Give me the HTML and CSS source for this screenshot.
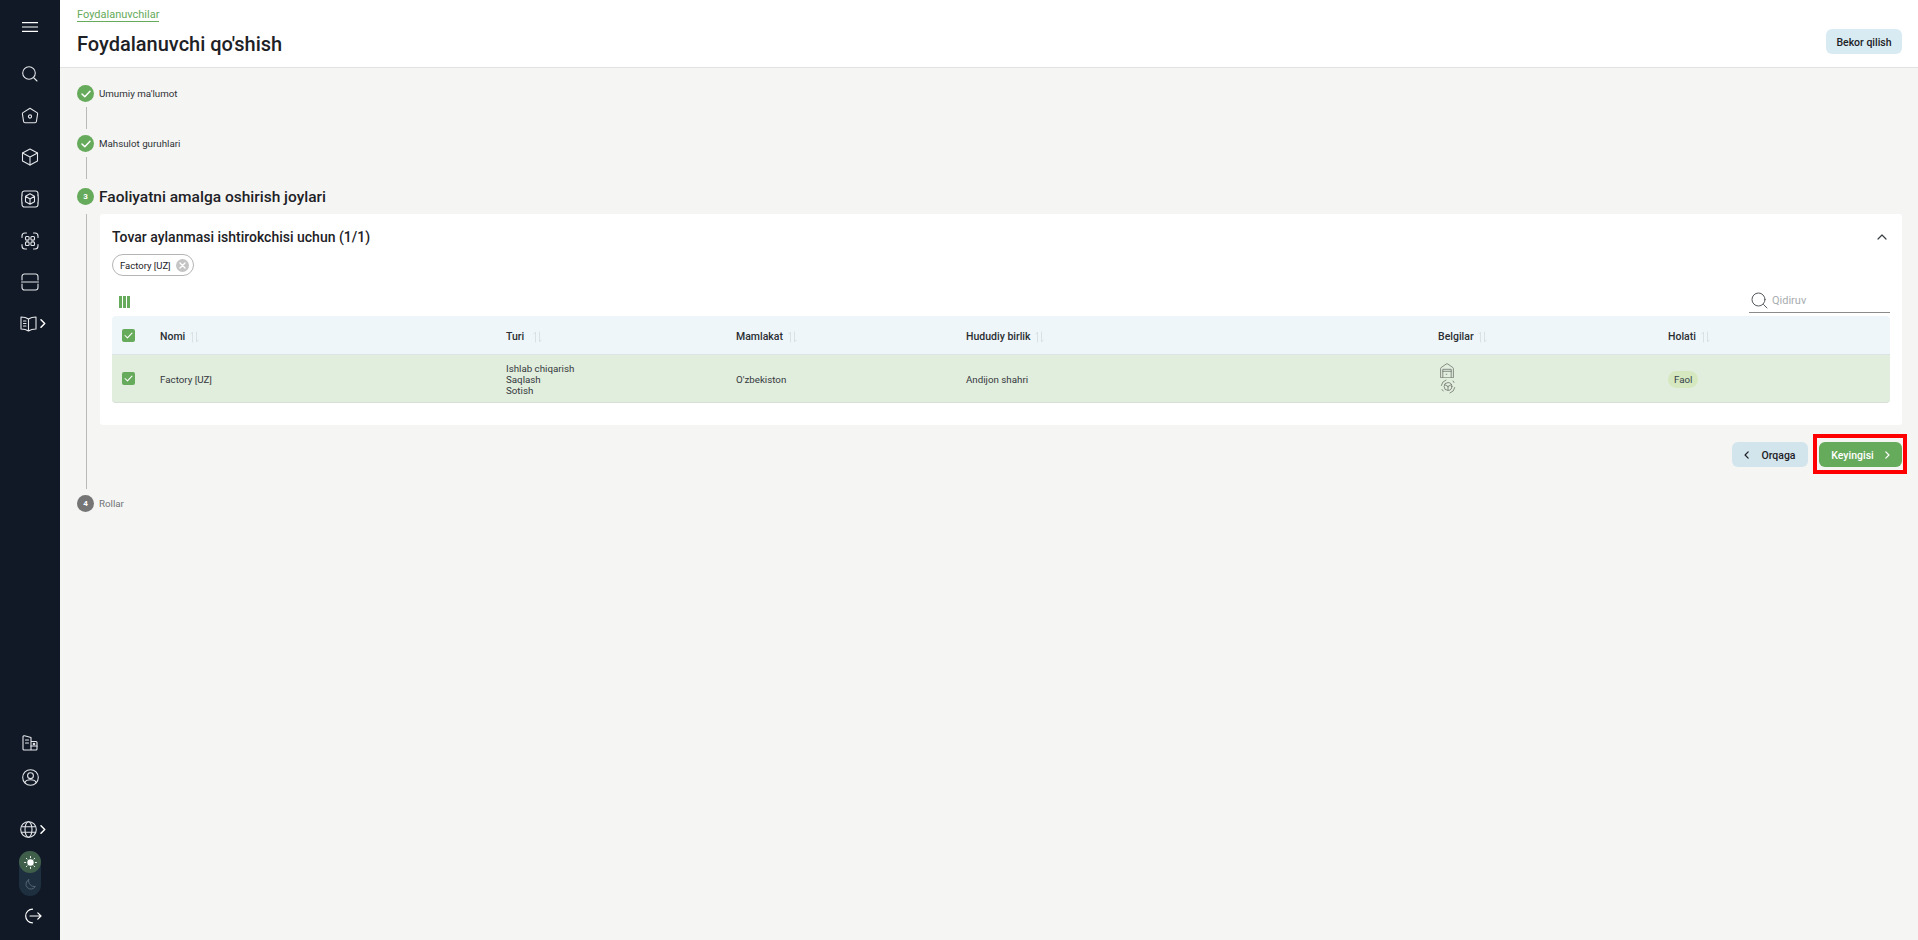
FILE: index.html
```html
<!DOCTYPE html>
<html lang="uz">
<head>
<meta charset="utf-8">
<title>Foydalanuvchi qo'shish</title>
<link rel="stylesheet" href="styles.css">
</head>
<body>
<div class="app">
  <aside class="sidebar">
    <div class="menu-btn"><svg width="16" height="10" viewBox="0 0 16 10"><path d="M0 .6h16M0 5h16M0 9.400h16"/></svg></div>
    <nav class="nav">
      <div class="nav-item"><svg width="18" height="18" viewBox="0 0 18 18"><circle cx="8" cy="8" r="6.3"/><path d="M13 13l3 3"/></svg></div>
      <div class="nav-item"><svg width="18" height="18" viewBox="0 0 18 18"><path d="M9 1.2l7 4.4c.5.3.7.8.6 1.3l-1.2 7.6c-.1.8-.7 1.3-1.5 1.3H4.1c-.8 0-1.4-.5-1.5-1.3L1.4 6.900c-.1-.5.1-1 .6-1.300z"/><circle cx="9" cy="9.500" r="1.600"/></svg></div>
      <div class="nav-item"><svg width="18" height="18" viewBox="0 0 18 18"><path d="M9 1l7.500 4v8L9 17l-7.500-4V5z"/><path d="M1.500 5L9 9l7.500-4M9 9v8"/></svg></div>
      <div class="nav-item"><svg width="18" height="18" viewBox="0 0 18 18"><path d="M1 5V3.500A2.500 2.500 0 0 1 3.500 1h11A2.500 2.500 0 0 1 17 3.500V5M1 13v1.500A2.500 2.500 0 0 0 3.500 17h11a2.500 2.500 0 0 0 2.500-2.500V13"/><path d="M9 3.800l4.500 2.500v5.400L9 14.200l-4.500-2.500V6.300zM4.500 6.300L9 9l4.500-2.700M9 9v5.200"/><path d="M1 5q-.6 4 0 8M17 5q.6 4 0 8"/></svg></div>
      <div class="nav-item"><svg width="18" height="18" viewBox="0 0 18 18"><path d="M1 5.500V4a3 3 0 0 1 3-3h1.500M12.500 1H14a3 3 0 0 1 3 3v1.500M17 12.500V14a3 3 0 0 1-3 3h-1.500M5.500 17H4a3 3 0 0 1-3-3v-1.500"/><rect x="4.500" y="4.500" width="3.600" height="3.600" rx="1"/><rect x="9.900" y="4.500" width="3.600" height="3.600" rx="1"/><rect x="4.500" y="9.900" width="3.600" height="3.600" rx="1"/><rect x="9.900" y="9.900" width="3.600" height="3.600" rx="1"/></svg></div>
      <div class="nav-item"><svg width="18" height="18" viewBox="0 0 18 18"><path d="M1 7V3.500A2.500 2.500 0 0 1 3.500 1h11A2.500 2.500 0 0 1 17 3.500V7M1 11v3.500A2.500 2.500 0 0 0 3.500 17h11a2.500 2.500 0 0 0 2.500-2.500V11M.5 9h17"/></svg></div>
      <div class="nav-item nav-item-more"><svg width="17" height="16" viewBox="0 0 17 16"><path d="M8.500 3C6.500 1.600 4 1 1 1v12c3 0 5.500.6 7.500 2 2-1.400 4.500-2 7.500-2V1c-3 0-5.500.6-7.500 2zM8.500 3v12"/><path d="M3.500 5h2.500M3.500 7.500h2.500M3.500 10h2.500"/></svg><svg class="more" width="6" height="9" viewBox="0 0 6 9"><path d="M1 .8l3.700 3.700L1 8.200"/></svg></div>
    </nav>
    <div class="side-bottom">
      <div class="nav-item nav-item-low"><svg width="16" height="16" viewBox="0 0 16 16"><path d="M9 15V2.500L2.500 .8C1.600.6 1 1.200 1 2v12c0 .6.400 1 1 1h12c.6 0 1-.4 1-1V7.500c0-.6-.4-1-1-1H9"/><path d="M3.500 5h3M3.500 8h3M9 11h6"/><circle cx="12" cy="9" r=".8"/></svg></div>
      <div class="nav-item nav-item-low"><svg width="17" height="17" viewBox="0 0 17 17"><circle cx="8.500" cy="8.500" r="7.800"/><circle cx="8.500" cy="6.700" r="2.900"/><path d="M3 13.500c.5-1.700 2.500-2.800 5.500-2.800s5 1.100 5.500 2.800"/></svg></div>
      <div class="nav-item nav-item-lang"><svg width="17" height="17" viewBox="0 0 17 17"><circle cx="8.500" cy="8.500" r="7.800"/><ellipse cx="8.500" cy="8.500" rx="3.500" ry="7.800"/><path d="M1.500 5.700h14M1.500 11.300h14"/></svg><svg class="more" width="6" height="9" viewBox="0 0 6 9"><path d="M1 .8l3.700 3.700L1 8.200"/></svg></div>
      <div class="theme-toggle">
        <span class="theme-sun"><svg width="13" height="13" viewBox="0 0 13 13"><circle class="sun-core" cx="6.500" cy="6.500" r="3.200"/><path d="M6.500 .5v1.200M6.500 11.300v1.200M.5 6.500h1.200M11.300 6.500h1.200M2.300 2.300l.8.8M9.900 9.900l.8.800M2.300 10.700l.8-.8M9.900 3.100l.8-.8"/></svg></span>
        <span class="theme-moon"><svg width="11" height="11" viewBox="0 0 11 11"><path d="M3.700.6a5 5 0 1 0 6.700 6.700A5.500 5.500 0 0 1 3.700.6z"/></svg></span>
      </div>
      <div class="logout"><svg width="17" height="16" viewBox="0 0 17 16"><path d="M7.500 1.200a6.800 6.800 0 1 0 0 13.600M5 8h11M12.800 4.800L16 8l-3.200 3.200"/></svg></div>
    </div>
  </aside>
  <main class="main">
    <header class="page-head">
      <div class="page-titles">
        <a class="crumb">Foydalanuvchilar</a>
        <h1 class="page-title">Foydalanuvchi qo'shish</h1>
      </div>
      <button class="btn btn-soft btn-cancel">Bekor qilish</button>
    </header>
    <section class="steps">
      <div class="step step-done">
        <div class="step-rail"><span class="dot dot-green"><svg width="10" height="8" viewBox="0 0 10 8"><path d="M1 4l2.800 2.800L9 1.200"/></svg></span><i class="rail-line"></i></div>
        <div class="step-label">Umumiy ma'lumot</div>
      </div>
      <div class="step step-done step-done-last">
        <div class="step-rail"><span class="dot dot-green"><svg width="10" height="8" viewBox="0 0 10 8"><path d="M1 4l2.800 2.800L9 1.200"/></svg></span><i class="rail-line"></i></div>
        <div class="step-label">Mahsulot guruhlari</div>
      </div>
      <div class="step step-active">
        <div class="step-rail"><span class="dot dot-green">3</span><i class="rail-line"></i></div>
        <div class="step-body">
          <h2 class="step-heading">Faoliyatni amalga oshirish joylari</h2>
          <div class="card">
            <div class="card-head">
              <h3 class="card-title">Tovar aylanmasi ishtirokchisi uchun (1/1)</h3>
              <svg class="collapse" width="10" height="6" viewBox="0 0 10 6"><path d="M1 5l4-4 4 4"/></svg>
            </div>
            <div class="chips">
              <span class="chip">Factory [UZ]<span class="chip-x"><svg width="7" height="7" viewBox="0 0 7 7"><path d="M1 1l5 5M6 1L1 6"/></svg></span></span>
            </div>
            <div class="tools">
              <div class="col-bars"><i></i><i></i><i></i></div>
              <div class="search"><svg width="17" height="17" viewBox="0 0 17 17"><circle cx="7.500" cy="7.500" r="6.500"/><path d="M12.500 12.500l3.500 3.500"/></svg><span>Qidiruv</span></div>
            </div>
            <table class="grid">
              <colgroup><col class="c-check"><col class="c-name"><col class="c-mid"><col class="c-mid"><col class="c-region"><col class="c-mid"><col></colgroup>
              <thead>
                <tr>
                  <th><span class="check"><svg width="10" height="8" viewBox="0 0 10 8"><path d="M1 4l2.800 2.800L9 1.200"/></svg></span></th>
                  <th>Nomi <svg class="sort" width="9" height="12" viewBox="0 0 9 12"><path d="M2.500 11V1L.8 3M6.500 1v10l1.700-2"/></svg></th>
                  <th>Turi <svg class="sort sort-wide" width="9" height="12" viewBox="0 0 9 12"><path d="M2.500 11V1L.8 3M6.500 1v10l1.700-2"/></svg></th>
                  <th>Mamlakat <svg class="sort" width="9" height="12" viewBox="0 0 9 12"><path d="M2.500 11V1L.8 3M6.500 1v10l1.700-2"/></svg></th>
                  <th>Hududiy birlik <svg class="sort" width="9" height="12" viewBox="0 0 9 12"><path d="M2.500 11V1L.8 3M6.500 1v10l1.700-2"/></svg></th>
                  <th>Belgilar <svg class="sort" width="9" height="12" viewBox="0 0 9 12"><path d="M2.500 11V1L.8 3M6.500 1v10l1.700-2"/></svg></th>
                  <th>Holati <svg class="sort" width="9" height="12" viewBox="0 0 9 12"><path d="M2.500 11V1L.8 3M6.500 1v10l1.700-2"/></svg></th>
                </tr>
              </thead>
              <tbody>
                <tr>
                  <td><span class="check"><svg width="10" height="8" viewBox="0 0 10 8"><path d="M1 4l2.800 2.800L9 1.200"/></svg></span></td>
                  <td>Factory [UZ]</td>
                  <td>Ishlab chiqarish<br>Saqlash<br>Sotish</td>
                  <td>O'zbekiston</td>
                  <td>Andijon shahri</td>
                  <td>
                    <div class="marks">
                      <svg width="14" height="15" viewBox="0 0 14 15"><path d="M.6 14.400V5.600c0-.5.2-.8.6-1.100L6.200 1c.5-.3 1.100-.3 1.600 0l5 3.500c.4.300.6.600.6 1.100v8.800z"/><path d="M2.800 14.400V6.300h8.400v8.100M2.800 8.300h8.400"/><path d="M6.200 11.300h.6"/></svg>
                      <svg width="16" height="15" viewBox="0 0 16 15"><circle cx="8" cy="7.500" r="3.900"/><path d="M8 7.500V11M8 7.500L4.800 5.700M8 7.500l3.200-1.800"/><path d="M1.300 6.500A6.800 6.800 0 0 1 6 1M14.800 8.500A6.800 6.800 0 0 1 10 14M2 10.500l1.200 1.500M13 2l1 1.500"/></svg>
                    </div>
                  </td>
                  <td><span class="pill">Faol</span></td>
                </tr>
              </tbody>
            </table>
          </div>
          <div class="actions">
            <button class="btn btn-soft btn-back"><svg width="5" height="8" viewBox="0 0 6 9"><path d="M5 .8L1.300 4.500 5 8.200"/></svg>Orqaga</button>
            <button class="btn btn-primary">Keyingisi<svg width="5" height="8" viewBox="0 0 6 9"><path d="M1 .8l3.700 3.700L1 8.200"/></svg></button>
          </div>
        </div>
      </div>
      <div class="step step-todo">
        <div class="step-rail"><span class="dot dot-grey">4</span></div>
        <div class="step-label">Rollar</div>
      </div>
    </section>
  </main>
</div>
</body>
</html>
```
FILE: styles.css
```css
* { box-sizing: border-box; }
html, body { margin: 0; height: 100%; }
body { font-family: Roboto, "Open Sans", sans-serif; color: #1d2126; background: #f5f5f3; overflow: hidden; }
svg { fill: none; stroke: currentColor; stroke-linecap: round; stroke-linejoin: round; }
h1, h2, h3 { margin: 0; }

.app { display: flex; height: 940px; }

.sidebar { width: 60px; flex: none; background: #111926; color: #e4e6e9; display: flex; flex-direction: column; align-items: center; }
.menu-btn { height: 53px; display: flex; align-items: center; justify-content: center; }
.menu-btn svg { stroke-width: 1.200; color: #fff; }
.nav { display: flex; flex-direction: column; width: 100%; }
.nav-item { height: 41.700px; display: flex; align-items: center; justify-content: center; gap: 3px; }
.nav-item svg { stroke-width: 1.100; }
.nav-item-more { padding-left: 6px; }
.nav-item .more { stroke-width: 1.500; color: #fff; }
.side-bottom { margin-top: auto; width: 100%; display: flex; flex-direction: column; align-items: center; padding-bottom: 14px; }
.nav-item-low { height: 35px; width: 100%; }
.nav-item-lang { height: 35px; width: 100%; margin-top: 17px; padding-left: 6px; }
.theme-toggle { width: 22px; height: 45px; margin-top: 4px; border-radius: 11px; background: #1e2f3f; display: flex; flex-direction: column; align-items: center; }
.theme-sun { width: 22px; height: 22px; border-radius: 50%; background: #3f5f4b; display: flex; align-items: center; justify-content: center; color: #fff; }
.theme-sun svg { stroke-width: .9; }
.sun-core { fill: #fff; stroke: none; }
.theme-moon { flex: 1; display: flex; align-items: center; justify-content: center; color: #5a6a78; }
.theme-moon svg { stroke-width: .9; }
.logout { margin-top: 12px; height: 18px; padding-left: 6px; color: #fff; }
.logout svg { stroke-width: 1.200; display: block; }

.main { flex: 1; min-width: 0; display: flex; flex-direction: column; }
.page-head { height: 68px; background: #fff; border-bottom: 1px solid #e2e2e2; display: flex; justify-content: space-between; padding: 8px 16px 0 17px; }
.page-titles { display: flex; flex-direction: column; align-items: flex-start; }
.crumb { font-size: 11px; line-height: 13px; color: #66aa5b; border-bottom: 1px solid #66aa5b; }
.page-title { font-size: 20px; font-weight: 500; line-height: 28px; margin-top: 8px; }

.btn { border: 0; border-radius: 6px; font-family: inherit; font-size: 10.500px; font-weight: 500; height: 25px; padding: 1px 0 0; display: inline-flex; align-items: center; justify-content: center; }
.btn svg { stroke-width: 1.500; }
.btn-soft { background: #d9ebf2; color: #1d2126; }
.btn-cancel { width: 76px; margin-top: 21px; }
.btn-back { width: 76px; gap: 12px; background: #d3e5ec; }
.btn-primary { width: 83px; gap: 11px; background: #66aa5b; color: #fff; position: relative; }
.btn-primary::after { content: ""; position: absolute; inset: -8px -5px -7px -6px; border: 4px solid #f00; pointer-events: none; }

.steps { padding: 17px 16px 0 17px; display: flex; flex-direction: column; }
.step { display: flex; gap: 6px; }
.step-done { height: 50px; }
.step-done-last { height: 53px; }
.step-rail { width: 17px; flex: none; display: flex; flex-direction: column; align-items: flex-start; }
.dot { width: 17px; height: 17px; flex: none; border-radius: 50%; color: #fff; display: flex; align-items: center; justify-content: center; font-size: 8px; font-weight: 700; }
.dot svg { stroke-width: 1.500; }
.dot-green { background: #66aa5b; }
.dot-grey { background: #757575; }
.rail-line { flex: 1; width: 1px; background: #b9b9b9; margin: 5px 0 6px 9px; display: block; }
.step-done-last .rail-line { margin-bottom: 9px; }
.step-active .rail-line { margin-top: 9px; margin-bottom: 6px; }
.step-label { font-size: 9.750px; line-height: 18px; color: #2c3136; margin-left: -1px; }
.step-todo .step-label { color: #6f7478; }
.step-body { flex: 1; min-width: 0; }
.step-heading { font-size: 15.500px; font-weight: 500; line-height: 18px; margin-left: -1px; }

.card { background: #fff; border-radius: 3px; padding: 0 12px 22px; margin-top: 8px; }
.card-head { height: 40px; display: flex; align-items: center; justify-content: space-between; padding-right: 3px; padding-top: 6px; }
.card-title { font-size: 14px; font-weight: 500; line-height: 20px; }
.collapse { stroke-width: 1.200; color: #3a3f44; }
.chips { display: flex; }
.chip { height: 22px; border: 1px solid #b5b5b5; border-radius: 11px; padding: 0 4px 0 7px; display: inline-flex; align-items: center; gap: 5px; font-size: 9.500px; color: #1d2126; }
.chip-x { width: 13px; height: 13px; border-radius: 50%; background: #c4c4c4; color: #fff; display: flex; align-items: center; justify-content: center; }
.chip-x svg { stroke-width: 1.400; }
.tools { height: 40px; display: flex; align-items: flex-end; justify-content: space-between; }
.col-bars { display: flex; gap: 1px; padding: 0 0 8px 7px; }
.col-bars i { width: 3px; height: 12px; background: #66aa5b; display: block; }
.search { width: 141px; height: 24px; border-bottom: 1px solid #8b8b8b; display: flex; align-items: center; gap: 4px; padding-left: 2px; font-size: 11px; color: #a9adb0; margin-bottom: 3px; }
.search svg { stroke-width: 1; color: #55595d; }

.grid { width: 100%; table-layout: fixed; border-collapse: separate; border-spacing: 0; font-size: 10.500px; }
.c-check { width: 48px; }
.c-name { width: 346px; }
.c-mid { width: 230px; }
.c-region { width: 472px; }
.grid th { height: 39px; background: #eff6f9; text-align: left; font-weight: 500; color: #2a2e33; padding: 2px 0 0; border-bottom: 1px solid #dde3e4; }
.grid td { height: 48px; background: #e1eddd; padding: 2px 0 0; font-size: 9.750px; line-height: 11.300px; color: #33383c; border-bottom: 1px solid #d8dfd6; }
.grid th:first-child, .grid td:first-child { padding: 0 0 0 10px; }
.grid th:first-child { border-top-left-radius: 4px; }
.grid th:last-child { border-top-right-radius: 4px; }
.grid td:first-child { border-bottom-left-radius: 4px; }
.grid td:last-child { border-bottom-right-radius: 4px; }
.check { width: 13px; height: 13px; border-radius: 2px; background: #66aa5b; color: #fff; display: flex; align-items: center; justify-content: center; }
.check svg { stroke-width: 1.200; width: 9px; height: 7px; }
.sort { color: #d9e1e4; stroke-width: 1; margin-left: 2px; vertical-align: -3px; }
.sort-wide { margin-left: 6px; }
.marks { display: flex; flex-direction: column; gap: 1px; color: #6e746c; padding-left: 2px; margin-top: -2px; }
.marks svg { stroke-width: .8; display: block; }
.pill { display: inline-block; background: #d5e8bf; border-radius: 9px; height: 17px; line-height: 17px; padding: 0 6px; font-size: 9.750px; color: #35424a; }

.actions { display: flex; justify-content: flex-end; gap: 11px; margin-top: 17px; }
.step-active { height: 307px; }
```
